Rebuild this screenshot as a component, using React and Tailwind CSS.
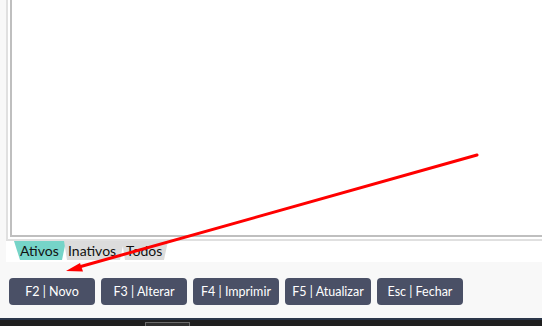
export default function App() {
    const botoes = ["F2 | Novo", "F3 | Alterar", "F4 | Imprimir", "F5 | Atualizar", "Esc | Fechar"];

    return (
        <div className="relative w-[542px] h-[326px] overflow-hidden bg-[#f8f8f8] flex flex-col font-['Lato',sans-serif]">
            {/* painel branco com a grade (vazia) */}
            <div className="ml-[6px] h-[262px] bg-white flex flex-col">
                <div className="h-[241px] border-l-2 border-b-2 border-[#e0e0e0] pl-[2px] pb-[2px]">
                    <div className="h-full border-l-2 border-b-2 border-[#bfbfbf] bg-white"></div>
                </div>
                <div className="flex h-[19px] pl-[8px] text-[14px] leading-[19px] text-[#111]">
                    <span className="w-[52px] pl-[6px] bg-[#76d4c8] [clip-path:polygon(0_0,100%_0,calc(100%-4px)_100%,6px_100%)]">
                        Ativos
                    </span>
                    <span className="-ml-[2px] w-[60px] pl-[4px] bg-[#dcdcdc] [clip-path:polygon(0_0,100%_0,calc(100%-4px)_100%,3px_100%)]">
                        Inativos
                    </span>
                    <span className="-ml-[2px] w-[46px] pl-[4px] bg-[#dcdcdc] [clip-path:polygon(0_0,100%_0,calc(100%-4px)_100%,3px_100%)]">
                        Todos
                    </span>
                </div>
            </div>

            {/* barra de botões */}
            <div className="flex gap-[6px] pl-[9px] pt-[16px] h-[56px]">
                {botoes.map(b => (
                    <button
                        key={b}
                        className="w-[86px] h-[27px] rounded-[4px] bg-[#4a5066] text-white text-[12.5px] leading-[27px] text-center"
                    >
                        {b}
                    </button>
                ))}
            </div>

            {/* barra de tarefas */}
            <div className="h-[2px] bg-[#2b3649]"></div>
            <div className="flex-1 bg-[#1f1f1f] pl-[145px] pt-[2px]">
                <div className="w-[45px] h-full border border-b-0 border-[#6b6b6b] bg-[#2e2e2e]"></div>
            </div>

            {/* seta vermelha de anotação */}
            <svg className="absolute inset-0 pointer-events-none" width="542" height="326" viewBox="0 0 542 326">
                <line x1="477" y1="155" x2="79" y2="267" stroke="#ff0000" strokeWidth="3" strokeLinecap="round" />
                <polygon points="66,271 80,263 83,271.5" fill="#ff0000" />
            </svg>
        </div>
    );
}
